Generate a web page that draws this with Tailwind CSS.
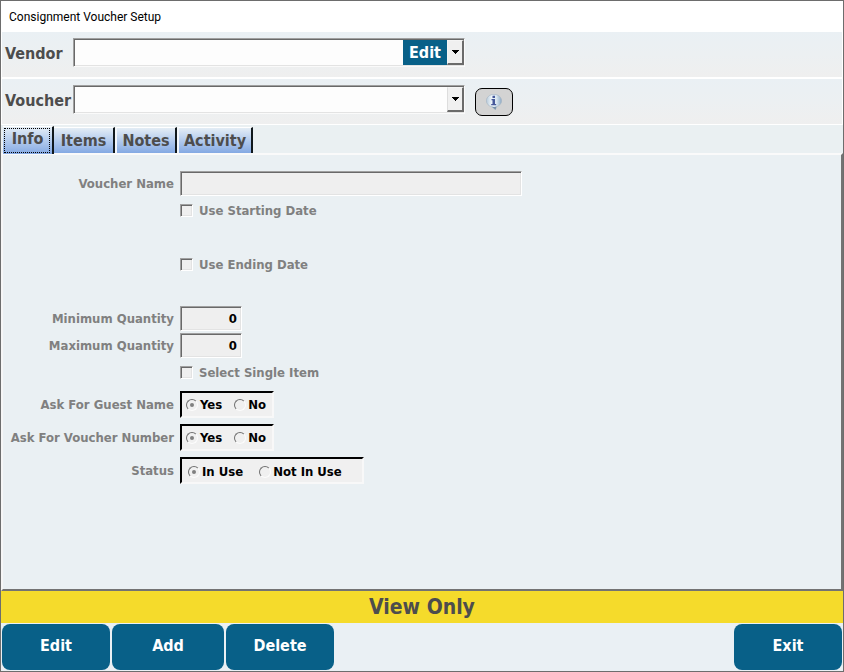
<!DOCTYPE html>
<html lang="en">
<head>
<meta charset="utf-8">
<meta name="viewport" content="width=device-width, initial-scale=1">
<title>Consignment Voucher Setup</title>
<script src="https://cdn.jsdelivr.net/npm/@tailwindcss/browser@4"></script>
</head>
<body class="flex min-h-screen flex-col border border-[#6d6d6d] bg-white font-['DejaVu_Sans_Condensed','DejaVu_Sans',sans-serif] font-bold text-[#4d4d4d]">
  <header class="flex h-[31px] items-center px-2">
    <h1 class="font-[Roboto,sans-serif] text-[12px] leading-4 font-normal text-black">Consignment Voucher Setup</h1>
  </header>

  <div class="mx-px mb-0.5 flex h-[45px] items-start bg-linear-to-b from-[#eaf0f4] via-[#ecf0f2] to-[#efefef] pt-1.5 pl-[3px]">
    <label for="vendor" class="w-[68px] text-[16px] leading-8">Vendor</label>
    <div class="flex h-[29px] w-[392px] border border-t-[#a0a0a0] border-r-[#fafafa] border-b-[#fafafa] border-l-[#a0a0a0] bg-[#fdfdfd] pt-px pb-px pl-px shadow-[inset_1px_1px_0_#696969,inset_0_-1px_0_#e3e3e3]">
      <select id="vendor" class="min-w-0 flex-1 appearance-none bg-transparent px-1 text-[13px] outline-none"><option></option></select>
      <button type="button" class="w-11 bg-[#086088] text-[16px] leading-6 text-white">Edit</button>
      <button type="button" aria-label="Open vendor list" class="flex w-[17px] items-center justify-center border border-r-2 border-b-2 border-t-[#f5f5f5] border-r-[#6b6b6b] border-b-[#6b6b6b] border-l-[#f5f5f5] bg-[#f0f0f0]">
        <svg class="h-1 w-[7px]" viewBox="0 0 7 4" shape-rendering="crispEdges"><path d="M0 0h7v1h-1v1h-1v1h-1v1h-1v-1h-1v-1h-1v-1h-1z" fill="#000"/></svg>
      </button>
    </div>
  </div>

  <div class="mx-px mb-px flex h-[45px] items-start bg-linear-to-b from-[#eaf0f4] via-[#ecf0f2] to-[#efefef] pt-1.5 pl-[3px]">
    <label for="voucher" class="w-[68px] text-[16px] leading-8">Voucher</label>
    <div class="flex h-[29px] w-[392px] border border-t-[#a0a0a0] border-r-[#fafafa] border-b-[#fafafa] border-l-[#a0a0a0] bg-[#fdfdfd] pt-px pb-px pl-px shadow-[inset_1px_1px_0_#696969,inset_0_-1px_0_#e3e3e3]">
      <select id="voucher" class="min-w-0 flex-1 appearance-none bg-transparent px-1 text-[13px] outline-none"><option></option></select>
      <button type="button" aria-label="Open voucher list" class="flex w-[17px] items-center justify-center border border-r-2 border-b-2 border-t-[#f5f5f5] border-r-[#6b6b6b] border-b-[#6b6b6b] border-l-[#dddddd] bg-[#f0f0f0]">
        <svg class="h-1 w-[7px]" viewBox="0 0 7 4" shape-rendering="crispEdges"><path d="M0 0h7v1h-1v1h-1v1h-1v1h-1v-1h-1v-1h-1v-1h-1z" fill="#000"/></svg>
      </button>
    </div>
    <button type="button" aria-label="Voucher information" class="mt-[3px] ml-2.5 flex h-7 w-[38px] items-center justify-center rounded-[7px] border border-black bg-[#d3d3d3] pb-px">
      <svg class="h-4 w-4" viewBox="0 0 16 16">
        <defs><linearGradient id="bubble" x1="0" y1="0" x2="1" y2="0"><stop offset="0" stop-color="#b9cbdb"/><stop offset=".35" stop-color="#eef5fa"/><stop offset=".65" stop-color="#dbe8f2"/><stop offset="1" stop-color="#8ea9c4"/></linearGradient></defs>
        <path d="M8 .4C3.800.4.4 3.200.4 6.800c0 2.900 2.200 5.200 5.300 6L9.500 15.700l.9-3c3-.8 5.200-3.100 5.200-5.900C15.600 3.200 12.200.4 8 .4z" fill="url(#bubble)" stroke="#a3b3c2" stroke-width=".6"/>
        <path d="M5.500 12.600L9.500 15.700l1-3.100c-1.500.5-3.500.5-5 0z" fill="#7690aa"/>
        <path d="M6.500 1.800h2.500v2.200H6.500zM5.500 5h3.500v5H10.200v1.200H5.200V10h1.300V6.200H5.500z" fill="#46589a"/>
      </svg>
    </button>
  </div>

  <main class="flex flex-1 flex-col bg-[#eaf0f4]">
    <nav role="tablist" class="flex h-7 items-end bg-[#eaf0f2] pl-0.5 text-[16px]">
      <button type="button" role="tab" aria-selected="true" class="relative -mb-px flex h-7 w-[51px] justify-center border-t border-r-2 border-t-white border-r-[#10181c] bg-linear-to-b from-[#e4edf5] to-[#84a9e3] leading-6">
        Info<span class="absolute inset-y-px right-0.5 left-px border border-dotted border-black"></span>
      </button>
      <button type="button" role="tab" aria-selected="false" class="h-[26px] w-[61px] border-t border-r-2 border-t-white border-r-[#10181c] bg-linear-to-b from-[#e4edf5] to-[#84a9e3] leading-6">Items</button>
      <button type="button" role="tab" aria-selected="false" class="h-[26px] w-[62px] border-t border-r-2 border-l-2 border-t-white border-r-[#10181c] border-l-[#f2f6fa] bg-linear-to-b from-[#e4edf5] to-[#84a9e3] leading-6">Notes</button>
      <button type="button" role="tab" aria-selected="false" class="h-[26px] w-[76px] border-t border-r-2 border-l-2 border-t-white border-r-[#10181c] border-l-[#f2f6fa] bg-linear-to-b from-[#e4edf5] to-[#84a9e3] leading-6">Activity</button>
    </nav>

    <form class="grid flex-1 grid-cols-[171px_1fr] content-start gap-x-1.5 border-2 border-t-[#fafafa] border-r-[#737373] border-b-[#737373] border-l-[#f6f6f6] bg-[#eaf0f3] pt-[15px] text-[13px] text-[#808080]">
      <label for="name" class="flex h-[27px] items-center justify-end">Voucher Name</label>
      <div class="flex h-[27px] items-center"><input id="name" type="text" class="h-[25px] w-[342px] border border-t-[#a0a0a0] border-r-white border-b-white border-l-[#a0a0a0] bg-[#efefef] px-1 shadow-[inset_1px_1px_0_#696969,inset_-1px_-1px_0_#e3e3e3]"></div>

      <label class="col-start-2 flex h-[27px] items-center gap-1.5"><input type="checkbox" class="h-[13px] w-[13px] appearance-none border border-t-[#a0a0a0] border-r-white border-b-white border-l-[#a0a0a0] bg-[#efefef] shadow-[inset_1px_1px_0_#696969,inset_-1px_-1px_0_#e3e3e3] checked:bg-[#808080]">Use Starting Date</label>
      <label class="col-start-2 mt-[27px] flex h-[27px] items-center gap-1.5"><input type="checkbox" class="h-[13px] w-[13px] appearance-none border border-t-[#a0a0a0] border-r-white border-b-white border-l-[#a0a0a0] bg-[#efefef] shadow-[inset_1px_1px_0_#696969,inset_-1px_-1px_0_#e3e3e3] checked:bg-[#808080]">Use Ending Date</label>

      <label for="min" class="mt-[27px] flex h-[27px] items-center justify-end">Minimum Quantity</label>
      <div class="mt-[27px] flex h-[27px] items-center"><input id="min" type="text" value="0" class="h-[25px] w-[62px] border border-t-[#a0a0a0] border-r-white border-b-white border-l-[#a0a0a0] bg-[#efefef] px-1 text-right text-black shadow-[inset_1px_1px_0_#696969,inset_-1px_-1px_0_#e3e3e3]"></div>
      <label for="max" class="flex h-[27px] items-center justify-end">Maximum Quantity</label>
      <div class="flex h-[27px] items-center"><input id="max" type="text" value="0" class="h-[25px] w-[62px] border border-t-[#a0a0a0] border-r-white border-b-white border-l-[#a0a0a0] bg-[#efefef] px-1 text-right text-black shadow-[inset_1px_1px_0_#696969,inset_-1px_-1px_0_#e3e3e3]"></div>

      <label class="col-start-2 mb-0.5 flex h-[27px] items-center gap-1.5"><input type="checkbox" class="h-[13px] w-[13px] appearance-none border border-t-[#a0a0a0] border-r-white border-b-white border-l-[#a0a0a0] bg-[#efefef] shadow-[inset_1px_1px_0_#696969,inset_-1px_-1px_0_#e3e3e3] checked:bg-[#808080]">Select Single Item</label>

      <span id="guest" class="flex h-[33px] items-center justify-end">Ask For Guest Name</span>
      <div class="flex h-[33px] items-center">
        <div role="radiogroup" aria-labelledby="guest" class="flex h-[27px] w-[94px] items-center gap-3 border-2 border-t-black border-r-[#f8f8f8] border-b-[#f8f8f8] border-l-black bg-[#f0f0f0] pl-1 text-black">
          <label class="flex items-center gap-0.5"><input type="radio" name="guest" checked class="h-3 w-3 appearance-none rounded-full border border-t-[#707070] border-r-[#fcfcfc] border-b-[#fcfcfc] border-l-[#707070] checked:bg-radial checked:from-[#808080] checked:from-20% checked:to-[#f0f0f0] checked:to-35%">Yes</label>
          <label class="flex items-center gap-0.5"><input type="radio" name="guest" class="h-3 w-3 appearance-none rounded-full border border-t-[#707070] border-r-[#fcfcfc] border-b-[#fcfcfc] border-l-[#707070] checked:bg-radial checked:from-[#808080] checked:from-20% checked:to-[#f0f0f0] checked:to-35%">No</label>
        </div>
      </div>

      <span id="number" class="flex h-[33px] items-center justify-end whitespace-nowrap">Ask For Voucher Number</span>
      <div class="flex h-[33px] items-center">
        <div role="radiogroup" aria-labelledby="number" class="flex h-[27px] w-[94px] items-center gap-3 border-2 border-t-black border-r-[#f8f8f8] border-b-[#f8f8f8] border-l-black bg-[#f0f0f0] pl-1 text-black">
          <label class="flex items-center gap-0.5"><input type="radio" name="number" checked class="h-3 w-3 appearance-none rounded-full border border-t-[#707070] border-r-[#fcfcfc] border-b-[#fcfcfc] border-l-[#707070] checked:bg-radial checked:from-[#808080] checked:from-20% checked:to-[#f0f0f0] checked:to-35%">Yes</label>
          <label class="flex items-center gap-0.5"><input type="radio" name="number" class="h-3 w-3 appearance-none rounded-full border border-t-[#707070] border-r-[#fcfcfc] border-b-[#fcfcfc] border-l-[#707070] checked:bg-radial checked:from-[#808080] checked:from-20% checked:to-[#f0f0f0] checked:to-35%">No</label>
        </div>
      </div>

      <span id="status" class="flex h-[33px] items-center justify-end">Status</span>
      <div class="flex h-[33px] items-center">
        <div role="radiogroup" aria-labelledby="status" class="flex h-[27px] w-[184px] items-center gap-4 border-2 border-t-black border-r-[#f8f8f8] border-b-[#f8f8f8] border-l-black bg-[#f0f0f0] pt-0.5 pl-1.5 text-black">
          <label class="flex items-center gap-0.5"><input type="radio" name="status" checked class="h-3 w-3 appearance-none rounded-full border border-t-[#707070] border-r-[#fcfcfc] border-b-[#fcfcfc] border-l-[#707070] checked:bg-radial checked:from-[#808080] checked:from-20% checked:to-[#f0f0f0] checked:to-35%">In Use</label>
          <label class="flex items-center gap-0.5"><input type="radio" name="status" class="h-3 w-3 appearance-none rounded-full border border-t-[#707070] border-r-[#fcfcfc] border-b-[#fcfcfc] border-l-[#707070] checked:bg-radial checked:from-[#808080] checked:from-20% checked:to-[#f0f0f0] checked:to-35%">Not In Use</label>
        </div>
      </div>
    </form>
  </main>

  <p class="h-8 bg-[#f5db2b] text-center text-[21px] leading-8">View Only</p>

  <footer class="flex h-12 gap-0.5 bg-[#eaf0f4] p-px text-[16px] text-white [text-shadow:1px_1px_0_#66727a]">
    <button type="button" class="w-[108px] rounded-lg bg-[#086088] pb-0.5">Edit</button>
    <button type="button" class="w-28 rounded-lg bg-[#086088] pb-0.5">Add</button>
    <button type="button" class="w-[108px] rounded-lg bg-[#086088] pb-0.5">Delete</button>
    <button type="button" class="ml-auto w-[108px] rounded-lg bg-[#086088] pb-0.5">Exit</button>
  </footer>
</body>
</html>
